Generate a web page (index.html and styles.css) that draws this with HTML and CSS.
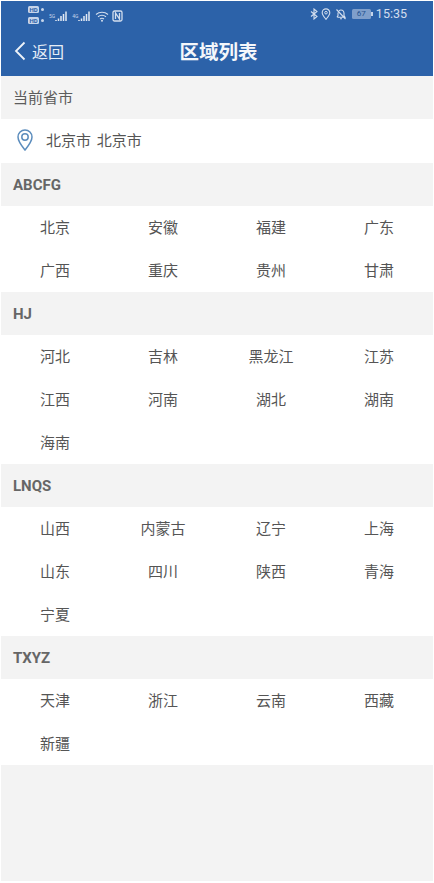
FILE: index.html
```html
<!DOCTYPE html>
<html lang="zh">
<head>
<meta charset="utf-8">
<title>区域列表</title>
<link rel="stylesheet" href="styles.css">
</head>
<body>
<div class="screen">
  <header class="head">
    <div class="status">
      <div class="status-left">
        <div class="hd"><span class="hd-row"><i class="hd-box">HD</i><i class="hd-dot"></i></span><span class="hd-row"><i class="hd-box">HD</i><i class="hd-dot"></i></span></div>
        <span class="net">5G</span>
        <svg class="sig" viewBox="0 0 12 11"><path d="M1 10V9M3.500 10V7.500M6 10V5M8.500 10V3M11 10V.5" /></svg>
        <span class="net">4G</span>
        <svg class="sig" viewBox="0 0 12 11"><path d="M1 10V9M3.500 10V7.500M6 10V5M8.500 10V3M11 10V.5" /></svg>
        <svg class="wifi" viewBox="0 0 14 11"><path d="M1 3.500C4.500.5 9.500.5 13 3.500M3 5.800c2.500-2 5.500-2 8 0M5 8c1.300-1 2.700-1 4 0" /><circle cx="7" cy="9.700" r="1" /></svg>
        <svg class="nfc" viewBox="0 0 11 12"><rect x="1" y="1" width="9" height="10" rx="1.500" /><path d="M3.500 9V3l4 6V3" /></svg>
      </div>
      <div class="status-right">
        <svg class="st-ic bt" viewBox="0 0 10 12"><path d="M2 3.500l6 5L5 11V1l3 2.500-6 5" /></svg>
        <svg class="st-ic" viewBox="0 0 10 12"><path d="M5 11.300C2.800 8.500 1.200 6.700 1.200 4.700a3.800 3.800 0 0 1 7.600 0c0 2-1.600 3.800-3.800 6.600z" /><circle cx="5" cy="4.700" r="1.300" /></svg>
        <svg class="st-ic bell" viewBox="0 0 12 12"><path d="M2.500 9.300h7.500L9 7.500V5a3 3 0 0 0-5-2.200M3 4.500v3L2 9.300M5 10.800h2M1.500 1.500l9 9.500" /></svg>
        <span class="batt"><span class="batt-num">67</span></span>
        <span class="time">15:35</span>
      </div>
    </div>
    <nav class="nav">
      <a class="back">
        <svg class="back-ic" viewBox="0 0 12 20"><path d="M10.500 1.500L2 10l8.500 8.500" /></svg>
        <span>返回</span>
      </a>
      <h1 class="title">区域列表</h1>
    </nav>
  </header>

  <main class="body">
    <div class="label label-plain">当前省市</div>
    <div class="current">
      <svg class="pin" viewBox="0 0 16 22"><path d="M8 21C3.800 15.800 1 12.500 1 8a7 7 0 0 1 14 0c0 4.500-2.800 7.800-7 13z" /><circle cx="8" cy="8" r="3.200" /></svg>
      <span class="current-name">北京市 北京市</span>
    </div>

    <div class="label label-strong">ABCFG</div>
    <div class="grid">
      <span>北京</span><span>安徽</span><span>福建</span><span>广东</span>
      <span>广西</span><span>重庆</span><span>贵州</span><span>甘肃</span>
    </div>

    <div class="label label-strong">HJ</div>
    <div class="grid">
      <span>河北</span><span>吉林</span><span>黑龙江</span><span>江苏</span>
      <span>江西</span><span>河南</span><span>湖北</span><span>湖南</span>
      <span>海南</span>
    </div>

    <div class="label label-strong">LNQS</div>
    <div class="grid">
      <span>山西</span><span>内蒙古</span><span>辽宁</span><span>上海</span>
      <span>山东</span><span>四川</span><span>陕西</span><span>青海</span>
      <span>宁夏</span>
    </div>

    <div class="label label-strong">TXYZ</div>
    <div class="grid">
      <span>天津</span><span>浙江</span><span>云南</span><span>西藏</span>
      <span>新疆</span>
    </div>
  </main>
</div>
</body>
</html>
```
FILE: styles.css
```css
* { box-sizing: border-box; }
html, body { margin: 0; height: 100%; background: #fff; }
body {
  padding: 1px 1px 2px;
  font-family: Roboto, "Noto Sans CJK SC", sans-serif;
  color: #555;
  overflow: hidden;
}
.screen { height: 880px; display: flex; flex-direction: column; background: #f3f3f3; }

.head { height: 75px; background: #2c62a9; color: #fff; flex: none; }
.status {
  height: 27px;
  padding: 0 26px 0 27px;
  display: flex;
  justify-content: space-between;
  align-items: center;
  color: #c6d5ea;
}
.status-left, .status-right { display: flex; align-items: center; }
.status-right { padding-bottom: 2px; }
.hd { display: flex; flex-direction: column; gap: 4px; margin-right: 3px; }
.hd-row { display: flex; align-items: center; gap: 2px; height: 7px; }
.hd-box {
  width: 11px; height: 7px; border-radius: 1.500px; background: #c6d5ea; color: #2c62a9;
  font: normal 700 6px/7px Roboto, sans-serif; text-align: center;
}
.hd-dot { width: 3px; height: 3px; border-radius: 50%; background: #c6d5ea; }
.net { font-size: 5px; line-height: 6px; align-self: flex-start; margin: 7px 0 0 2px; }
.sig { width: 12px; height: 11px; margin: 3px 3px 0 0; }
.sig path { fill: none; stroke: #e2eaf4; stroke-width: 1.500; }
.wifi { width: 14px; height: 11px; margin: 3px 3px 0 2px; }
.wifi path { fill: none; stroke: #d3deee; stroke-width: 1.100; }
.wifi circle { fill: #d3deee; }
.nfc { width: 11px; height: 12px; margin-top: 3px; }
.nfc rect { fill: none; stroke: #d3deee; stroke-width: 1.300; }
.nfc path { fill: none; stroke: #d3deee; stroke-width: 1.300; }
.st-ic { width: 10px; height: 12px; margin-right: 4px; }
.st-ic path { fill: none; stroke: #d3deee; stroke-width: 1.100; }
.st-ic circle { fill: none; stroke: #d3deee; stroke-width: 1; }
.bt { margin-right: 2px; }
.bell { width: 12px; margin-right: 5px; }
.batt {
  width: 19px; height: 10px; margin-right: 5px; border-radius: 1.500px; background: #7f9fcb;
  position: relative; display: flex; align-items: center; justify-content: center;
}
.batt::after {
  content: ""; position: absolute; right: -2px; top: 3px; width: 1.500px; height: 4px; background: #c6d5ea;
}
.batt-num { font-size: 8px; line-height: 10px; color: #24538f; }
.time { font-size: 12.500px; line-height: 14px; color: #d3deee; }

.nav { height: 48px; position: relative; display: flex; align-items: center; justify-content: center; padding: 2px 0 0 3px; }
.back {
  position: absolute; left: 13px; top: 13px; height: 20px;
  display: flex; align-items: center; gap: 6px;
  font-size: 16px; color: #e6edf6;
}
.back-ic { width: 12px; height: 20px; }
.back-ic path { fill: none; stroke: #eef3f9; stroke-width: 1.800; }
.title { margin: 0; font-size: 19.500px; font-weight: 700; line-height: 24px; color: #f4f7fb; }

.body { flex: 1; }
.label { height: 43px; padding-left: 12px; display: flex; align-items: center; font-size: 15px; color: #5c5c5c; background: #f3f3f3; }
.label-plain { padding-bottom: 2px; }
.label-strong { font-weight: 700; color: #666; }
.current {
  height: 44px; background: #fff; padding: 0 0 2px 16px; display: flex; align-items: center;
  font-size: 15px; color: #555;
}
.current-name { word-spacing: 2px; padding-bottom: 1px; }
.pin { width: 16px; height: 22px; margin-right: 13px; }
.pin path, .pin circle { fill: none; stroke: #5c8dbd; stroke-width: 1.500; }
.grid { display: grid; grid-template-columns: repeat(4, 108px); grid-auto-rows: 43px; background: #fff; }
.grid span { display: flex; align-items: center; justify-content: center; padding-bottom: 2px; font-size: 15px; color: #555; }
```
